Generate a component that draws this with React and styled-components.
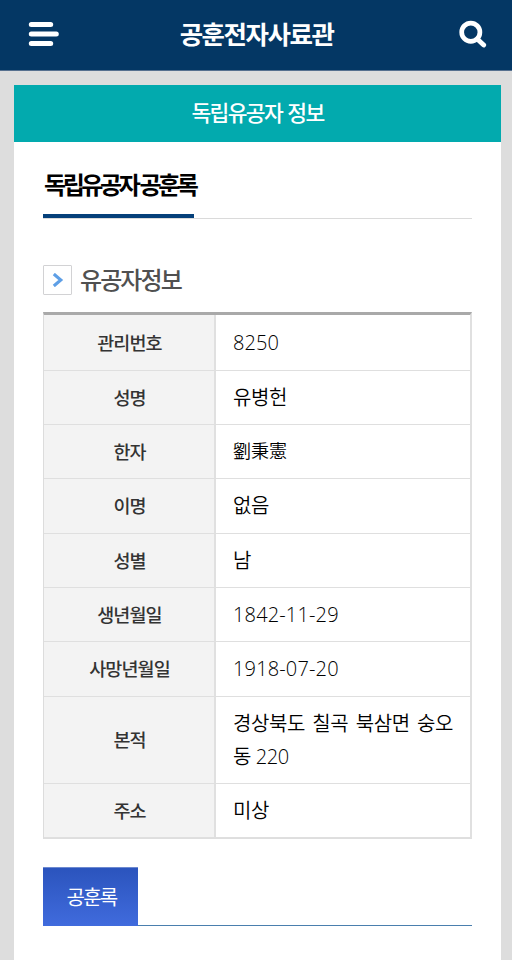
import styled, { createGlobalStyle } from 'styled-components';

const GlobalStyle = createGlobalStyle`
  * {
    box-sizing: border-box;
  }

  body {
    margin: 0;
    background: #dddddd;
    font-family: 'Open Sans', 'Noto Sans CJK KR', sans-serif;
    color: #000000;
  }
`;

const Page = styled.div`
  display: flex;
  flex-direction: column;
  height: 960px;
  overflow: hidden;
`;

const Header = styled.header`
  display: flex;
  flex: none;
  align-items: center;
  justify-content: space-between;
  height: 71px;
  padding: 0 25px 2px 28px;
  background: #043764;
  border-bottom: 1px solid #56708f;
`;

const SiteTitle = styled.h1`
  margin: 0;
  padding: 0 5px 2px 0;
  font-family: 'Noto Sans CJK KR', sans-serif;
  font-size: 25.5px;
  font-weight: 700;
  line-height: 36px;
  letter-spacing: -1.5px;
  color: #ffffff;
`;

const IconButton = styled.button`
  display: flex;
  padding: 0;
  background: none;
  border: 0;
`;

const Card = styled.main`
  flex: 1;
  margin: 14px 11px 0 14px;
  background: #ffffff;
`;

const CardTitle = styled.h2`
  margin: 0;
  height: 57px;
  font-family: 'Noto Sans CJK KR', sans-serif;
  font-size: 21.5px;
  font-weight: 500;
  line-height: 54px;
  letter-spacing: -1.65px;
  word-spacing: 2px;
  text-align: center;
  color: #ffffff;
  background: #02aaae;
`;

const Content = styled.div`
  padding: 0 29px;
`;

const SectionTitle = styled.div`
  display: flex;
  height: 77px;
  border-bottom: 1px solid #dadada;
`;

const SectionTitleText = styled.h3`
  width: 151px;
  height: 76px;
  margin: 0;
  padding-left: 1px;
  font-family: 'Noto Sans CJK KR', sans-serif;
  font-size: 24px;
  font-weight: 700;
  line-height: 84px;
  letter-spacing: -3.4px;
  white-space: nowrap;
  border-bottom: 4px solid #05407a;
`;

const SubTitle = styled.div`
  display: flex;
  align-items: center;
  gap: 8px;
  margin: 43px 0 14px;
  height: 36px;
`;

const ArrowBox = styled.span`
  display: flex;
  align-items: center;
  justify-content: center;
  width: 29px;
  height: 30px;
  border: 1px solid #d2d2d4;
  border-radius: 1px;
`;

const SubTitleText = styled.h4`
  margin: 0;
  padding-bottom: 2px;
  font-family: 'Noto Sans CJK KR', sans-serif;
  font-size: 24px;
  font-weight: 500;
  line-height: 36px;
  letter-spacing: -1.9px;
  color: #505050;
`;

const Table = styled.dl`
  margin: 0;
  border-top: 3px solid #a9a9a9;
  border-right: 2px solid #e0e0e0;
  border-bottom: 1px solid #dedede;
  border-left: 1px solid #dcdcdc;
`;

const Row = styled.div`
  display: grid;
  grid-template-columns: 172px 1fr;
  height: ${props => props.height}px;
  border-bottom: 1px solid #dfdfdf;
`;

const Label = styled.dt`
  display: flex;
  align-items: center;
  justify-content: center;
  padding: 0 0 2px 1px;
  font-family: 'Noto Sans CJK KR', sans-serif;
  font-size: 18.5px;
  font-weight: 500;
  letter-spacing: -0.9px;
  color: #333333;
  background: #f3f3f3;
  border-right: 2px solid #e0e0e0;
`;

const Value = styled.dd`
  margin: 0;
  padding: 10px 17px;
  font-family: 'Open Sans', 'Noto Sans CJK KR', sans-serif;
  font-size: ${props => props.size || '20px'};
  font-weight: 350;
  line-height: 33px;
  letter-spacing: ${props => props.spacing || '-0.4px'};
  text-align: justify;
  word-break: break-all;

  ${Row}:first-child & {
    padding-top: 11px;
  }
`;

const Tabs = styled.nav`
  display: flex;
  height: 59px;
  margin-top: 28px;
  border-bottom: 1px solid #4a7fae;
`;

const Tab = styled.button`
  width: 95px;
  height: 59px;
  padding: 0 0 2px 2px;
  font-family: 'Noto Sans CJK KR', sans-serif;
  font-size: 20px;
  font-weight: 400;
  letter-spacing: -1.7px;
  color: #ffffff;
  background: linear-gradient(#2b54bd, #406bdd);
  border: 0;
  border-top: 1px solid #6d89d0;
`;

const MenuIcon = () => (
  <svg width="32" height="26" viewBox="0 0 32 26" stroke="#fff" strokeWidth="5" strokeLinecap="round">
    <path d="M3.3 3.5H22.7M3.3 13H28.3M3.3 22.5H22.7" />
  </svg>
);

const SearchIcon = () => (
  <svg width="29" height="29" viewBox="0 0 29 29" fill="none" stroke="#fff" strokeLinecap="round">
    <circle cx="12.8" cy="12.2" r="9.1" strokeWidth="4.7" />
    <path d="M19.5 19.2L25.7 25" strokeWidth="4.8" />
  </svg>
);

const ArrowIcon = () => (
  <svg width="13" height="14" viewBox="0 0 13 14" fill="none" stroke="#5e9fe6" strokeWidth="3.1">
    <path d="M2.8 1L9.8 7L2.8 13" />
  </svg>
);

const rows = [
  { label: '관리번호', value: '8250', height: 56, spacing: '0.1px' },
  { label: '성명', value: '유병헌', height: 54 },
  { label: '한자', value: '劉秉憲', height: 54, size: '18px', spacing: '0' },
  { label: '이명', value: '없음', height: 55 },
  { label: '성별', value: '남', height: 54 },
  { label: '생년월일', value: '1842-11-29', height: 54, spacing: '0.15px' },
  { label: '사망년월일', value: '1918-07-20', height: 55, spacing: '0.15px' },
  { label: '본적', value: '경상북도 칠곡 북삼면 숭오동 220', height: 87 },
  { label: '주소', value: '미상', height: 54 },
];

const App = () => (
  <>
    <GlobalStyle />
    <Page>
      <Header>
        <IconButton aria-label="menu">
          <MenuIcon />
        </IconButton>
        <SiteTitle>공훈전자사료관</SiteTitle>
        <IconButton aria-label="search">
          <SearchIcon />
        </IconButton>
      </Header>
      <Card>
        <CardTitle>독립유공자 정보</CardTitle>
        <Content>
          <SectionTitle>
            <SectionTitleText>독립유공자 공훈록</SectionTitleText>
          </SectionTitle>
          <SubTitle>
            <ArrowBox>
              <ArrowIcon />
            </ArrowBox>
            <SubTitleText>유공자정보</SubTitleText>
          </SubTitle>
          <Table>
            {rows.map(({ label, value, height, size, spacing }) => (
              <Row key={label} height={height}>
                <Label>{label}</Label>
                <Value size={size} spacing={spacing}>
                  {value}
                </Value>
              </Row>
            ))}
          </Table>
          <Tabs>
            <Tab>공훈록</Tab>
          </Tabs>
        </Content>
      </Card>
    </Page>
  </>
);

export default App;
